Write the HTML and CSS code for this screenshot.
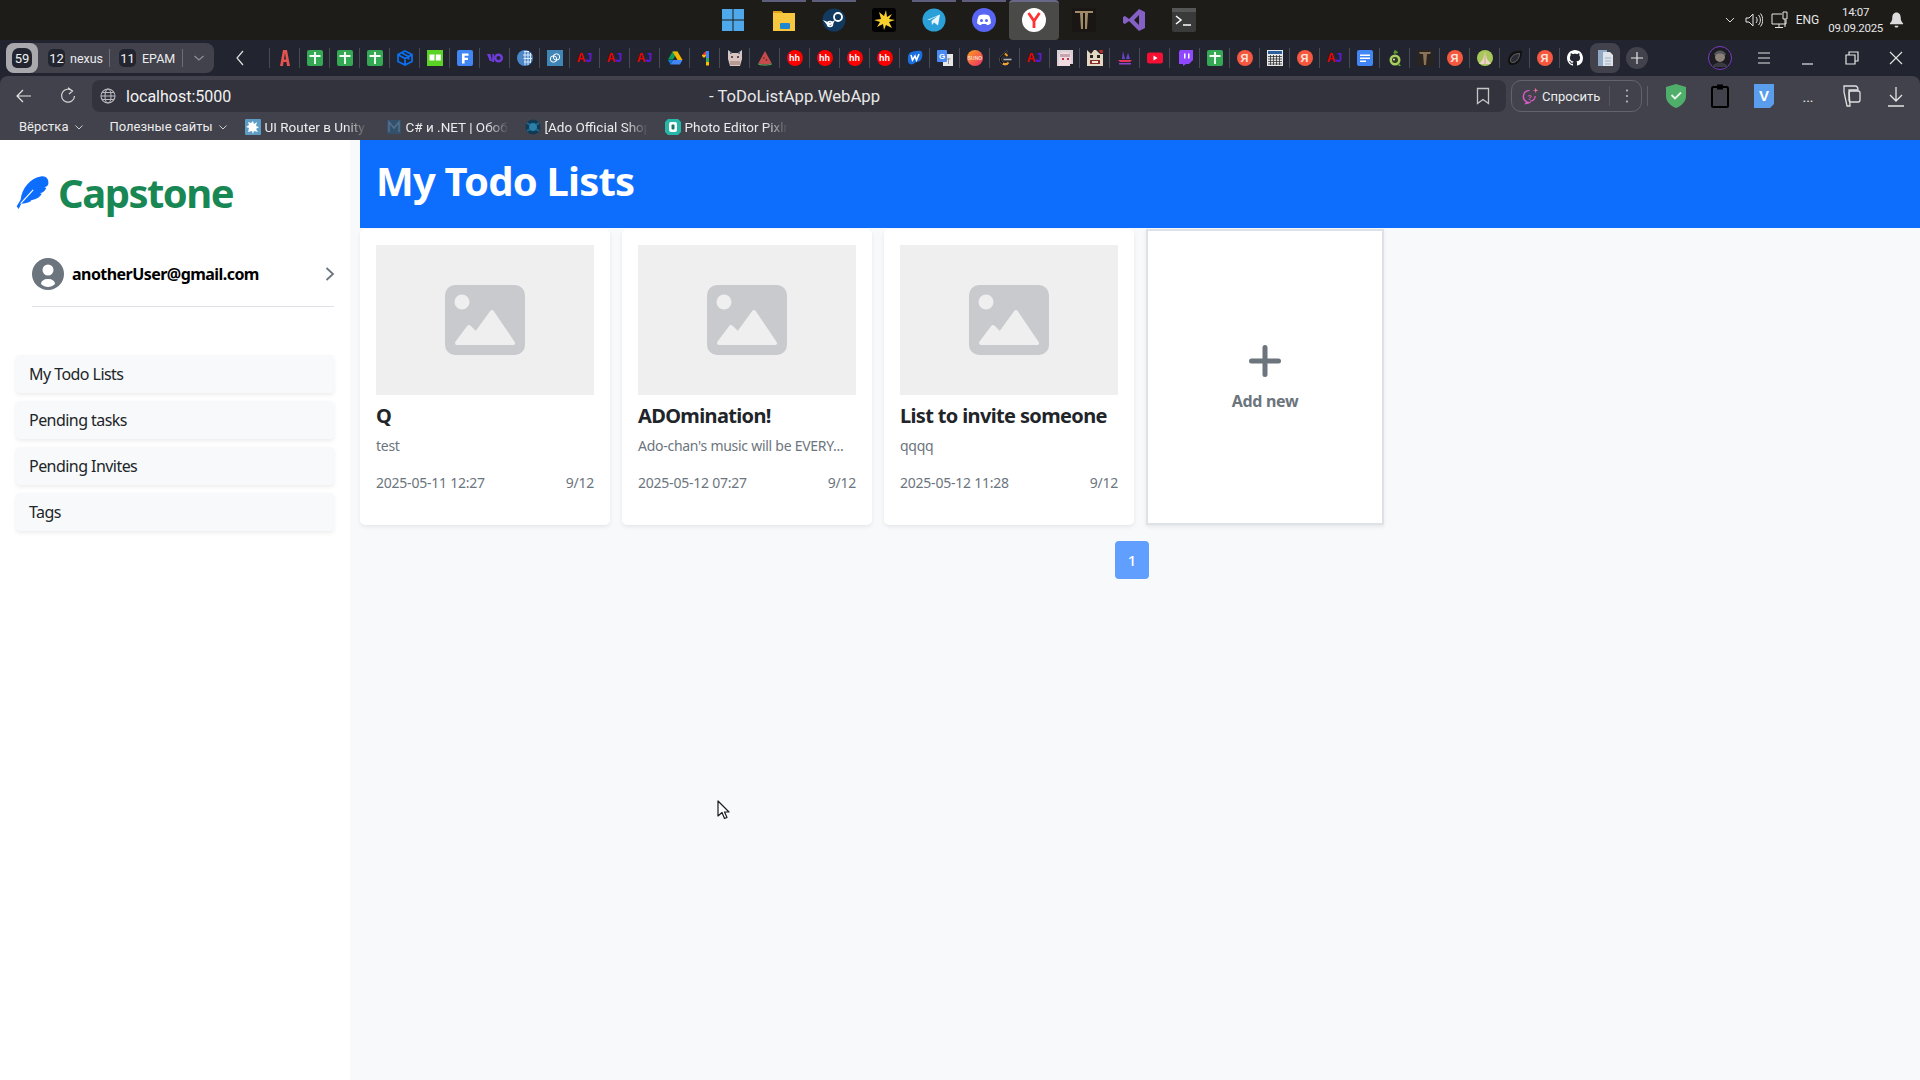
FILE: index.html
```html
<!DOCTYPE html>
<html lang="en">
<head>
    <meta charset="UTF-8">
    <meta name="viewport" content="width=device-width, initial-scale=1.0">
    <title>ToDoListApp.WebApp</title>
    <link rel="stylesheet" href="styles.css">
</head>
<body>
    <svg class="defs" aria-hidden="true">
        <defs>
            <linearGradient id="sunoGrad" x1="0" y1="0" x2="1" y2="1"><stop offset="0" stop-color="#f9a11b"/><stop offset="1" stop-color="#ee2a6b"/></linearGradient>
        </defs>
        <symbol id="fav-a" viewBox="0 0 16 16"><path d="M3 16 6 0h4l3 16h-3l-.5-4h-3L6 16zM7 9.500h2L8 3z" fill="#e5534f"/></symbol>
        <symbol id="fav-t" viewBox="0 0 16 16"><rect width="16" height="16" rx="2" fill="#34a853"/><path d="M2.500 6h11M8 2v12" stroke="#fff" stroke-width="1.800" fill="none"/></symbol>
        <symbol id="fav-cube" viewBox="0 0 16 16"><path d="M8 1 15 4.500v7L8 15 1 11.500v-7zM1.500 5 8 8.500 14.500 5M8 8.500V15M5 3l6.500 3.500v3" fill="none" stroke="#0b6ff0" stroke-width="1.800"/></symbol>
        <symbol id="fav-board" viewBox="0 0 16 16"><rect width="16" height="16" fill="#5bd324"/><rect x="2.500" y="4.500" width="5" height="6" fill="#fff"/><rect x="8.800" y="4.500" width="5" height="6" fill="#fff"/></symbol>
        <symbol id="fav-f" viewBox="0 0 16 16"><rect width="16" height="16" rx="2" fill="#4285f4"/><path d="M5 3.500h6.500v2.300H7.600v2h3.400v2.200H7.600v3.500H5z" fill="#fff"/></symbol>
        <symbol id="fav-yo" viewBox="0 0 16 16"><path d="M0 4h3.500L5 11H2.800zM5.500 4H7v8H5z" fill="#6f3ce0"/><circle cx="11.500" cy="8" r="3.300" fill="none" stroke="#6f3ce0" stroke-width="2.400"/></symbol>
        <symbol id="fav-globe" viewBox="0 0 16 16"><circle cx="8" cy="8" r="8" fill="#4a86c8"/><path d="M7 1.500h5M6 5h8.500M6.500 8.500h8.500M7 12h6M8 1v14M11 1v14M13.500 3v10" stroke="#dfeaf6" stroke-width="1" fill="none"/></symbol>
        <symbol id="fav-link" viewBox="0 0 16 16"><rect width="16" height="16" fill="#3f86b6"/><circle cx="6.500" cy="9" r="3.200" fill="none" stroke="#fff"/><circle cx="9.500" cy="7" r="3.200" fill="none" stroke="#fff"/></symbol>
        <symbol id="fav-drive" viewBox="0 0 16 16"><path d="M5.500 1.500h5L6 9.500H1z" fill="#0f9d58"/><path d="M10.500 1.500 15.500 10H10.500L5.500 1.500z" fill="#f4b400"/><path d="M3.500 14.500 6 10h9.500L13 14.500z" fill="#4285f4"/><path d="M1 10h5l-2.500 4.500z" fill="#0f7cd8"/></symbol>
        <symbol id="fav-one" viewBox="0 0 16 16"><path d="M5 5 9 1v4z" fill="#ea4335"/><path d="M5 5h4v1L7 8 5 6z" fill="#fbbc04"/><path d="M9 1h3v7H9z" fill="#4285f4"/><path d="M9 8h3v4H9z" fill="#34a853"/><path d="M9 12h3v3.500H9z" fill="#fbbc04"/></symbol>
        <symbol id="fav-cat" viewBox="0 0 16 16"><rect width="16" height="16" fill="#22252f"/><path d="M1 0 5 3h6l4-3v9l-2 7H3L1 9z" fill="#d8c5c0"/><path d="M3 1 5 4H3zM13 1v3h-2z" fill="#5a6ea8"/><rect x="4" y="6" width="2" height="2" fill="#6a4a5a"/><rect x="10" y="6" width="2" height="2" fill="#6a4a5a"/><rect x="3" y="11" width="10" height="4" fill="#b89a94"/></symbol>
        <symbol id="fav-melon" viewBox="0 0 16 16"><path d="M8 1 14.500 13c-3 2-10 2-13 0z" fill="#c94a4a"/><path d="M1.500 13c3 2 10 2 13 0l.5 1.500c-3 1.500-11 1.500-14 0z" fill="#4f9a55"/><circle cx="7" cy="8" r=".7" fill="#3a1a1a"/><circle cx="9.500" cy="10" r=".7" fill="#3a1a1a"/></symbol>
        <symbol id="fav-w" viewBox="0 0 16 16"><path d="M1 7c0-3 2-5 5-5.500C10 1 14 0 15 2c1 3 0 7-2 9-1.500 1-3 .5-4.500 1.500C6 15 3 15 1.500 13 .5 11 1 9 1 7z" fill="#1a6fe0"/><path d="M4 5l1.500 5L8 6l1.500 4L12 4" fill="none" stroke="#fff" stroke-width="1.600"/></symbol>
        <symbol id="fav-leet" viewBox="0 0 16 16"><path d="M10 1 4 7.500c-1 1.500-1 3 0 4l2 2c1.500 1 3 1 4.500 0" fill="none" stroke="#e8e8e8" stroke-width="1.800"/><path d="M10 1 4 7.500c-1 1.500-1 3 0 4l2 2" fill="none" stroke="#111" stroke-width="1.800"/><path d="M8 3.500 10.500 6" stroke="#f89f1b" stroke-width="1.800"/><path d="M6.500 9.500h8" stroke="#b3b3b3" stroke-width="1.600"/><path d="M6 13.500c1.500 1 3 1 4.500 0l1-1" fill="none" stroke="#f89f1b" stroke-width="1.800"/></symbol>
        <symbol id="fav-anime1" viewBox="0 0 16 16"><rect width="16" height="16" fill="#d8d0d4"/><path d="M2 16V5c1-4 11-4 12 0v11z" fill="#f1dbe0"/><path d="M3 4h10v3H3z" fill="#c8a4b0"/><rect x="5" y="8" width="2" height="2" fill="#b83a4a"/><rect x="10" y="8" width="2" height="2" fill="#b83a4a"/><rect x="13" y="14" width="3" height="2" fill="#222"/></symbol>
        <symbol id="fav-anime2" viewBox="0 0 16 16"><rect width="16" height="16" fill="#e2d8c4"/><path d="M0 0h7L4 4zM9 0h7v4l-3 0z" fill="#2a2326"/><path d="M12 0h4v3h-3z" fill="#b32c2c"/><rect x="3" y="5" width="3" height="3" fill="#2a2326"/><rect x="10" y="5" width="3" height="3" fill="#2a2326"/><path d="M3 10h10v4H3z" fill="#8a2e2e"/><path d="M5 11h6v2H5z" fill="#f1e8d8"/></symbol>
        <symbol id="fav-boat" viewBox="0 0 16 16"><path d="M6 1 5 9h3zM11 3l-2 6h4z" fill="#6a45c8"/><path d="M1 10h14l-2 2H3z" fill="#e5345f"/><path d="M2 13h12v1.500H2z" fill="#8a45d0"/></symbol>
        <symbol id="fav-yt" viewBox="0 0 16 16"><rect y="2.500" width="16" height="11" rx="2.500" fill="#f60f33"/><path d="M6.500 5.500 10.500 8l-4 2.500z" fill="#fff"/></symbol>
        <symbol id="fav-twitch" viewBox="0 0 16 16"><path d="M3 0h13v10l-4 4H9l-3 2v-2H2V2z" fill="#9146ff"/><path d="M7 3.500h1.500v5H7zM11 3.500h1.500v5H11z" fill="#fff"/></symbol>
        <symbol id="fav-table" viewBox="0 0 16 16"><rect width="16" height="16" fill="#e6e6e6"/><rect x="1" y="1" width="14" height="3" fill="#2d5f9a"/><path d="M1 6.500h14M1 9h14M1 11.500h14M1 14h14M3.500 5v10M6.500 5v10M9.500 5v10M12.500 5v10" stroke="#333" stroke-width=".8"/></symbol>
        <symbol id="fav-docs" viewBox="0 0 16 16"><rect width="16" height="16" rx="2" fill="#4285f4"/><path d="M3 4.500h10v1.500H3zM3 7.500h10V9H3zM3 10.500h6V12H3z" fill="#fff"/></symbol>
        <symbol id="fav-apple" viewBox="0 0 16 16"><circle cx="8" cy="10" r="5.500" fill="#a8d060"/><circle cx="8" cy="10" r="3" fill="#2f3a20"/><circle cx="7" cy="9.500" r="1" fill="#e8e8c8"/><path d="M7 4C6 2 7 1 8 0c1 1 3 1 3 3z" fill="#5a9a30"/><path d="M12 13l2 3h-3z" fill="#5a9a30"/></symbol>
        <symbol id="fav-dark" viewBox="0 0 16 16"><rect width="16" height="16" fill="#2a2420"/><path d="M2 2h12l-1 2h-3l-1 11H7L6 4H3z" fill="#8a7358"/></symbol>
        <symbol id="fav-pray" viewBox="0 0 16 16"><circle cx="8" cy="8" r="8" fill="#a8c85a"/><path d="M8 2 10 9l4 5H2l4-5z" fill="#ecd8c0"/><path d="M8 4v10" stroke="#b89a80" stroke-width=".7"/></symbol>
        <symbol id="fav-leaf" viewBox="0 0 16 16"><path d="M15 1C8 0 1 3 1 11c0 2 1 4 4 4 7 0 10-7 10-14z" fill="#111"/><path d="M12.500 3.500C8 3.500 3.500 6 3.500 10.500c0 1 .5 2 2 2 4 0 7-4 7-9z" fill="#2a2d36" stroke="#777" stroke-width=".8"/></symbol>
        <symbol id="fav-github" viewBox="0 0 16 16"><path fill="#fff" d="M8 0C3.580 0 0 3.580 0 8c0 3.540 2.290 6.530 5.470 7.590.4.070.55-.17.55-.38 0-.19-.01-.82-.01-1.490-2.010.37-2.530-.49-2.690-.94-.09-.23-.48-.94-.82-1.130-.28-.15-.68-.52-.01-.53.63-.01 1.080.58 1.230.82.720 1.210 1.870.87 2.330.66.070-.52.280-.87.510-1.070-1.780-.2-3.640-.89-3.640-3.950 0-.87.310-1.590.820-2.150-.08-.2-.36-1.020.08-2.120 0 0 .67-.21 2.200.82.640-.18 1.320-.27 2-.27.680 0 1.360.090 2 .270 1.530-1.040 2.200-.82 2.200-.82.440 1.100.160 1.920.080 2.120.510.560.820 1.270.820 2.150 0 3.070-1.870 3.750-3.650 3.950.29.250.54.730.54 1.480 0 1.070-.01 1.930-.01 2.200 0 .21.150.46.550.38A8.013 8.013 0 0016 8c0-4.420-3.580-8-8-8z"/></symbol>
        <symbol id="photo" viewBox="0 0 80 70"><rect width="80" height="70" rx="10" fill="#c9cacd"/><circle cx="17" cy="17" r="7.500" fill="#efefef"/><path d="M12 58 24 42l7 7L47 27l21 31z" fill="#efefef" stroke="#efefef" stroke-width="4" stroke-linejoin="round"/></symbol>
    </svg>

    <div class="taskbar">
        <div class="task-apps">
            <span class="task-app task-app-first"><svg class="task-icon" viewBox="0 0 24 24"><path d="M1 1h10.500v10.500H1zM12.500 1H23v10.500H12.500zM1 12.500h10.500V23H1zM12.500 12.500H23V23H12.500z" fill="#4fa8ea"/></svg></span>
            <span class="task-app task-app-on"><svg class="task-icon" viewBox="0 0 24 24"><path d="M1 3h8l2 2h12v18H1z" fill="#f7c83f"/><path d="M1 3h8l2 2H1z" fill="#e0a21c"/><rect x="8" y="15" width="10" height="6" rx="1" fill="#1f86d0"/></svg></span>
            <span class="task-app task-app-on"><svg class="task-icon" viewBox="0 0 24 24"><circle cx="12" cy="12" r="11.500" fill="#123a60"/><circle cx="16" cy="9" r="4" fill="none" stroke="#fff" stroke-width="1.800"/><circle cx="8" cy="16" r="2.500" fill="none" stroke="#fff" stroke-width="1.500"/><path d="M1 12l7 3 5-3-2 4-5 2z" fill="#fff"/></svg></span>
            <span class="task-app"><svg class="task-icon" viewBox="0 0 24 24"><rect width="24" height="24" rx="3" fill="#000"/><path d="M14 2l1 7 5-3-3 5 6 1-6 2 3 6-6-3-2 5-1-6-6 3 3-5-6-2 7-1-2-7 5 4z" fill="#f7d02c"/></svg></span>
            <span class="task-app task-app-on"><svg class="task-icon" viewBox="0 0 24 24"><circle cx="12" cy="12" r="11.500" fill="#2a9fd8"/><path d="M5 12l13-5.500-2 11-4-3-2 2.500-.5-4 6-5-8 4z" fill="#e8f5fb"/></svg></span>
            <span class="task-app task-app-on"><svg class="task-icon" viewBox="0 0 24 24"><circle cx="12" cy="12" r="12" fill="#5865f2"/><path d="M7 7.500c3-1.300 7-1.300 10 0 1.500 2.500 2 5.500 1.800 8-1.300 1-2.600 1.500-3.800 1.800l-.8-1.300H9.800L9 17.300c-1.200-.3-2.500-.8-3.800-1.800C5 13 5.500 10 7 7.500z" fill="#fff"/><circle cx="9.500" cy="12.500" r="1.500" fill="#5865f2"/><circle cx="14.500" cy="12.500" r="1.500" fill="#5865f2"/></svg></span>
            <span class="task-app task-app-active"><svg class="task-icon" viewBox="0 0 24 24"><circle cx="12" cy="12" r="12" fill="#fff"/><path d="M6.500 5l5.500 8 5.500-8M12 13v7" fill="none" stroke="#f33" stroke-width="2.800"/></svg></span>
            <span class="task-app"><svg class="task-icon" viewBox="0 0 24 24"><rect width="24" height="24" fill="#191613"/><path d="M3 3h18v2h-5l-1 16h-2V5h-2v16H9L8 5H3z" fill="#a08a68"/></svg></span>
            <span class="task-app"><svg class="task-icon" viewBox="0 0 24 24"><path d="M17 1l6 3v16l-6 3L7 13l-4 3-2-1V9l2-1 4 3zM17 7l-5 5 5 5z" fill="#8661c5" fill-rule="evenodd"/></svg></span>
            <span class="task-app"><svg class="task-icon" viewBox="0 0 24 24"><rect width="24" height="24" rx="2" fill="#3a3a3a"/><rect width="24" height="4" fill="#565656"/><path d="M4 8l5 4-5 4" fill="none" stroke="#fff" stroke-width="1.500"/><path d="M11 17h8" stroke="#fff" stroke-width="1.500"/></svg></span>
        </div>
        <div class="tray">
            <svg class="tray-chevron" viewBox="0 0 12 12"><path d="M2 4l4 4 4-4" fill="none" stroke="#ddd"/></svg>
            <svg class="tray-icon" viewBox="0 0 18 18"><path d="M1 7v4h3l4 4V3L4 7zM11 6c1.500 1.800 1.500 4.200 0 6M13.500 4c2.500 3 2.500 7 0 10M15.500 2.500c3 4 3 9 0 13" fill="none" stroke="#e6e6e6"/></svg>
            <svg class="tray-icon tray-net" viewBox="0 0 18 18"><path d="M11 3H1v10h14v-4M8 13v3M4 16.500h8M12 1h4v7h-4zM14 8v8" fill="none" stroke="#e6e6e6"/></svg>
            <span class="tray-lang">ENG</span>
            <div class="tray-clock"><span>14:07</span><span>09.09.2025</span></div>
            <svg class="tray-bell" viewBox="0 0 16 16"><path d="M8 0c3 0 4.500 2.500 4.500 5.500 0 3 1 4.500 2.500 6v1H1v-1c1.500-1.500 2.500-3 2.500-6C3.500 2.500 5 0 8 0zM6 14h4c0 1.500-1 2-2 2s-2-.5-2-2z" fill="#dcdcdc"/></svg>
        </div>
    </div>

    <div class="tabstrip">
        <div class="tab-groups">
            <span class="tab-count"><b class="tab-shield">59</b></span>
            <span class="tab-group tab-group-nexus"><b class="tab-badge">12</b>nexus</span>
            <span class="tab-group tab-group-epam"><b class="tab-badge">11</b>EPAM</span>
            <svg class="tab-more" viewBox="0 0 12 12"><path d="M1.500 4 6 8l4.500-4" fill="none" stroke="#8d8e98" stroke-width="1.300"/></svg>
        </div>
        <svg class="tab-back" viewBox="0 0 12 20"><path d="M9 3 3 10l6 7" fill="none" stroke="#e0e0e0" stroke-width="1.200"/></svg>
        <div class="favs">
            <span class="fav"><svg><use href="#fav-a"/></svg></span>
            <span class="fav"><svg><use href="#fav-t"/></svg></span>
            <span class="fav"><svg><use href="#fav-t"/></svg></span>
            <span class="fav"><svg><use href="#fav-t"/></svg></span>
            <span class="fav"><svg><use href="#fav-cube"/></svg></span>
            <span class="fav"><svg><use href="#fav-board"/></svg></span>
            <span class="fav"><svg><use href="#fav-f"/></svg></span>
            <span class="fav"><svg><use href="#fav-yo"/></svg></span>
            <span class="fav"><svg><use href="#fav-globe"/></svg></span>
            <span class="fav"><svg><use href="#fav-link"/></svg></span>
            <span class="fav"><b class="ico-aj">A<i>J</i></b></span>
            <span class="fav"><b class="ico-aj">A<i>J</i></b></span>
            <span class="fav"><b class="ico-aj">A<i>J</i></b></span>
            <span class="fav"><svg><use href="#fav-drive"/></svg></span>
            <span class="fav"><svg><use href="#fav-one"/></svg></span>
            <span class="fav"><svg><use href="#fav-cat"/></svg></span>
            <span class="fav"><svg><use href="#fav-melon"/></svg></span>
            <span class="fav"><b class="ico-hh">hh</b></span>
            <span class="fav"><b class="ico-hh">hh</b></span>
            <span class="fav"><b class="ico-hh">hh</b></span>
            <span class="fav"><b class="ico-hh">hh</b></span>
            <span class="fav"><svg><use href="#fav-w"/></svg></span>
            <span class="fav"><svg viewBox="0 0 16 16"><rect x="6" y="4" width="10" height="12" fill="#e8e8e8"/><rect width="10" height="12" rx="1" fill="#4a8af4"/><text x="5" y="9" class="glyph-small" fill="#fff" text-anchor="middle">G</text><path d="M9.500 9h4M11.500 8v6" stroke="#9a9a9a"/></svg></span>
            <span class="fav"><svg viewBox="0 0 16 16"><circle cx="8" cy="8" r="8" fill="url(#sunoGrad)"/><text x="8" y="9.800" class="glyph-tiny" fill="#fbd9c0" text-anchor="middle">SUNO</text></svg></span>
            <span class="fav"><svg><use href="#fav-leet"/></svg></span>
            <span class="fav"><b class="ico-aj">A<i>J</i></b></span>
            <span class="fav"><svg><use href="#fav-anime1"/></svg></span>
            <span class="fav"><svg><use href="#fav-anime2"/></svg></span>
            <span class="fav"><svg><use href="#fav-boat"/></svg></span>
            <span class="fav"><svg><use href="#fav-yt"/></svg></span>
            <span class="fav"><svg><use href="#fav-twitch"/></svg></span>
            <span class="fav"><svg><use href="#fav-t"/></svg></span>
            <span class="fav"><b class="ico-ya">Я</b></span>
            <span class="fav"><svg><use href="#fav-table"/></svg></span>
            <span class="fav"><b class="ico-ya">Я</b></span>
            <span class="fav"><b class="ico-aj">A<i>J</i></b></span>
            <span class="fav"><svg><use href="#fav-docs"/></svg></span>
            <span class="fav"><svg><use href="#fav-apple"/></svg></span>
            <span class="fav"><svg><use href="#fav-dark"/></svg></span>
            <span class="fav"><b class="ico-ya">Я</b></span>
            <span class="fav"><svg><use href="#fav-pray"/></svg></span>
            <span class="fav"><svg><use href="#fav-leaf"/></svg></span>
            <span class="fav"><b class="ico-ya">Я</b></span>
            <span class="fav"><svg><use href="#fav-github"/></svg></span>
        </div>
        <span class="tab-active"><svg viewBox="0 0 18 18"><path d="M2 1h9v16H2z" fill="#8fa8c4"/><path d="M7 3h7l3 3v11H7z" fill="#dfe4ea"/><path d="M9 9h6M9 12h6M9 15h6" stroke="#9fb0c2"/></svg></span>
        <span class="tab-new"><svg viewBox="0 0 14 14"><path d="M7 1v12M1 7h12" stroke="#e8e8e8" stroke-width="1.200"/></svg></span>
        <span class="tab-avatar"><svg viewBox="0 0 24 24"><circle cx="12" cy="12" r="11.500" fill="#1c1c22" stroke="#7a3fc0"/><circle cx="12" cy="11" r="5" fill="#8a8178"/><path d="M4 21c2-6 14-6 16 0z" fill="#3a3a42"/><path d="M6 9c1-6 11-6 12 0H16c-1-2-7-2-8 0z" fill="#55555c"/></svg></span>
        <div class="win-buttons">
            <svg viewBox="0 0 16 16"><path d="M2 3h12M2 8h12M2 13h12" stroke="#e6e6e6"/></svg>
            <svg viewBox="0 0 16 16"><path d="M2 14h11" stroke="#e6e6e6" stroke-width="1.200"/></svg>
            <svg viewBox="0 0 16 16"><path d="M5 5V2h9v9h-3M2 5h9v9H2z" fill="none" stroke="#e6e6e6" stroke-width="1.200"/></svg>
            <svg viewBox="0 0 16 16"><path d="M2 2l12 12M14 2 2 14" stroke="#e6e6e6" stroke-width="1.100"/></svg>
        </div>
    </div>

    <div class="browser-panel">
        <div class="address-row">
            <svg class="nav-btn" viewBox="0 0 18 18"><path d="M16 9H2M8 3 2 9l6 6" fill="none" stroke="#e4e4e4" stroke-width="1.200"/></svg>
            <svg class="nav-btn" viewBox="0 0 18 18"><path d="M13.500 4A6.500 6.500 0 1 0 15.500 9M9 0.800l4.500 3.200-3.500 3" fill="none" stroke="#d8d8d8" stroke-width="1.200"/></svg>
            <div class="address-bar">
                <svg class="address-globe" viewBox="0 0 16 16"><g fill="none" stroke="#b9b9bf" stroke-width="1.100"><circle cx="8" cy="8" r="7"/><ellipse cx="8" cy="8" rx="3" ry="7"/><path d="M1 8h14M2 4.500h12M2 11.500h12"/></g></svg>
                <span class="address-url">localhost:5000</span>
                <span class="address-title">- ToDoListApp.WebApp</span>
                <svg class="address-mark" viewBox="0 0 14 18"><path d="M1.500 1.500h11v15L7 12.500l-5.500 4z" fill="none" stroke="#c6c6c9" stroke-width="1.300"/></svg>
            </div>
            <div class="ask-pill">
                <svg class="ask-icon" viewBox="0 0 18 18"><path d="M8 3a6.500 6.500 0 1 0 0 13c-1 1-3 1-4 1 .5-.5 1-1.500.5-2A6.500 6.500 0 0 1 8 3z" fill="none" stroke="#d95cc4" stroke-width="1.400"/><path d="M8.500 14.500A6 6 0 0 0 14 9" fill="none" stroke="#d95cc4" stroke-width="1.400"/><text x="5.500" y="13" class="glyph-small" fill="#d95cc4">?</text><path d="M14.500 0l.7 2.300 2.300.7-2.300.7-.7 2.300-.7-2.300-2.300-.7 2.300-.7z" fill="#ef6ba8"/></svg>
                <span class="ask-text">Спросить</span>
                <span class="ask-sep"></span>
                <svg class="ask-dots" viewBox="0 0 4 16"><circle cx="2" cy="2.500" r="1.100" fill="#b9b9bf"/><circle cx="2" cy="8" r="1.100" fill="#b9b9bf"/><circle cx="2" cy="13.500" r="1.100" fill="#b9b9bf"/></svg>
            </div>
            <span class="tool-sep"></span>
            <div class="tools">
                <svg viewBox="0 0 20 24"><path d="M10 0l10 3v9c0 6-5 10-10 12C5 22 0 18 0 12V3z" fill="#4fae6a"/><path d="M5.500 11l3.500 3.500 6-6" fill="none" stroke="#e8f5ea" stroke-width="1.800"/></svg>
                <svg viewBox="0 0 18 24"><rect x="1" y="3" width="16" height="20" rx="1.500" fill="none" stroke="#000" stroke-width="2"/><rect x="6" y="0.500" width="6" height="5" fill="#000"/></svg>
                <svg viewBox="0 0 20 24"><path d="M0 0h20v20l-4 4H0z" fill="#5b9ded"/><text x="10" y="17" class="glyph-v" fill="#fff" text-anchor="middle">V</text></svg>
                <span class="tool-more">...</span>
                <svg viewBox="0 0 20 24"><path d="M2 2h11c3 0 3 2 3 4H7l1 16H5L2 8z" fill="none" stroke="#e0e0e0" stroke-width="1.300"/><rect x="7" y="7" width="11" height="11" rx="2" fill="none" stroke="#e0e0e0" stroke-width="1.300"/></svg>
                <svg viewBox="0 0 20 24"><path d="M10 3v14M4 11l6 6 6-6M2 22h16" fill="none" stroke="#e4e4e4" stroke-width="1.300"/></svg>
            </div>
        </div>
        <div class="bookmarks">
            <span class="bm-folder bm-first">Вёрстка<svg viewBox="0 0 10 10"><path d="M1.500 3.500 5 7l3.500-3.500" fill="none" stroke="#cfcfd3"/></svg></span>
            <span class="bm-folder">Полезные сайты<svg viewBox="0 0 10 10"><path d="M1.500 3.500 5 7l3.500-3.500" fill="none" stroke="#cfcfd3"/></svg></span>
            <span class="bm-link bm-link-wide"><svg viewBox="0 0 16 16"><rect width="16" height="16" rx="1" fill="#5d9cc4"/><path d="M8 2l1 3 3-2-1 4 3 1-3 2 2 3-4-1-1 3-1-3-4 1 1-4-3-1 3-2-1-3 3 1z" fill="#fff"/></svg><span class="bm-label">UI Router в Unity</span></span>
            <span class="bm-link"><svg viewBox="0 0 16 16"><path d="M1 1h14v14H1z" fill="#34506a"/><path d="M3 13V3l5 6 5-6v10" fill="none" stroke="#52728e" stroke-width="1.500"/></svg><span class="bm-label">C# и .NET | Обоб</span></span>
            <span class="bm-link bm-link-ado"><svg viewBox="0 0 16 16"><circle cx="8" cy="8" r="7.500" fill="#113a55"/><circle cx="8" cy="8" r="4" fill="#2c7fa8"/><path d="M2 4l3 2M14 4l-3 2M2 12l3-2M14 12l-3-2" stroke="#1d6a8f" stroke-width="2"/></svg><span class="bm-label">[Ado Official Shop</span></span>
            <span class="bm-link"><svg viewBox="0 0 16 16"><path d="M3 0h10l3 3v10l-3 3H3l-3-3V3z" fill="#26b7a8"/><rect x="4" y="3" width="8" height="10" rx="2" fill="#fff"/><rect x="6.500" y="5.500" width="3" height="5" rx="1" fill="#17756c"/></svg><span class="bm-label">Photo Editor Pixlr:</span></span>
        </div>
    </div>

    <div class="app">
        <aside class="sidebar">
            <div class="brand">
                <svg class="brand-icon" viewBox="20 24 100 100"><path d="M22 116 34 96C38 62 62 30 98 25c14-1 22 9 20 23-2 6-6 8-12 10l6 2c-4 10-12 14-20 16l6 2c-6 12-20 18-34 20l2 2c-10 6-20 8-30 8l-8 16z" fill="#0d6efd"/><path d="M34 108 72 66" stroke="#fff" stroke-width="3.500"/></svg>
                <span class="brand-name">Capstone</span>
            </div>
            <div class="user-row">
                <svg class="user-avatar" viewBox="0 0 32 32"><circle cx="16" cy="16" r="16" fill="#6c757d"/><circle cx="16" cy="12" r="5.500" fill="#fff"/><path d="M9 26c0-3 3-5 7-5s7 2 7 5c-2 2-4.500 3-7 3s-5-1-7-3z" fill="#fff"/></svg>
                <span class="user-email">anotherUser@gmail.com</span>
                <svg class="user-chevron" viewBox="0 0 10 16"><path d="M1.500 2l6.500 6-6.500 6" fill="none" stroke="#6c757d" stroke-width="1.800"/></svg>
            </div>
            <nav class="side-nav">
                <a class="side-link">My Todo Lists</a>
                <a class="side-link">Pending tasks</a>
                <a class="side-link">Pending Invites</a>
                <a class="side-link">Tags</a>
            </nav>
        </aside>
        <main class="main">
            <header class="page-head"><h1>My Todo Lists</h1></header>
            <section class="card-grid">
                <article class="todo-card">
                    <div class="todo-img"><svg><use href="#photo"/></svg></div>
                    <h2>Q</h2>
                    <p class="todo-desc">test</p>
                    <div class="todo-meta"><span>2025-05-11 12:27</span><span>9/12</span></div>
                </article>
                <article class="todo-card">
                    <div class="todo-img"><svg><use href="#photo"/></svg></div>
                    <h2>ADOmination!</h2>
                    <p class="todo-desc">Ado-chan's music will be EVERY...</p>
                    <div class="todo-meta"><span>2025-05-12 07:27</span><span>9/12</span></div>
                </article>
                <article class="todo-card">
                    <div class="todo-img"><svg><use href="#photo"/></svg></div>
                    <h2>List to invite someone</h2>
                    <p class="todo-desc">qqqq</p>
                    <div class="todo-meta"><span>2025-05-12 11:28</span><span>9/12</span></div>
                </article>
                <a class="add-card">
                    <svg viewBox="0 0 32 32"><path d="M16 2.500v27M2.500 16h27" stroke="#6c757d" stroke-width="5" stroke-linecap="round"/></svg>
                    <span>Add new</span>
                </a>
            </section>
            <div class="pager"><span class="page-num">1</span></div>
        </main>
    </div>

    <svg class="mouse" viewBox="0 0 13 20"><path d="M1 1v15l4-3.500 2.500 6 2.500-1-2.500-5.500H12z" fill="#fff" stroke="#1a1a22" stroke-width="1.200" stroke-linejoin="round"/></svg>
</body>
</html>
```

FILE: styles.css
```css
* {
    box-sizing: border-box;
}
html, body {
    height: 100%;
}
body {
    margin: 0;
    display: flex;
    flex-direction: column;
    overflow: hidden;
    font-family: "Noto Sans", "Open Sans", sans-serif;
    background-color: #22252f;
    color: #212529;
}
.defs {
    display: block;
    width: 0;
    height: 0;
}
.glyph-small {
    font: 700 8px "Liberation Sans", sans-serif;
}
.glyph-tiny {
    font: 700 5px "Liberation Sans", sans-serif;
}
.glyph-v {
    font: 700 15px "Liberation Sans", sans-serif;
}

/* windows taskbar */
.taskbar {
    height: 40px;
    flex: none;
    display: flex;
    background-color: #1d1c19;
    color: #e6e6e6;
    font-family: Roboto, sans-serif;
}
.task-apps {
    display: flex;
    margin-left: 707px;
}
.task-app {
    width: 50px;
    height: 40px;
    padding-bottom: 2px;
    display: flex;
    align-items: center;
    justify-content: center;
    border-top: 2px solid transparent;
}
.task-app-first {
    width: 52px;
}
.task-app-on {
    border-image: linear-gradient(to right, transparent 5px, #5f5d7c 5px, #5f5d7c 45px, transparent 45px) 2;
}
.task-app-active {
    background-color: #4a4a48;
    border-radius: 4px;
    border-top-color: #6a6888;
}
.task-icon {
    width: 24px;
    height: 24px;
}
.tray {
    margin-left: auto;
    display: flex;
    align-items: center;
    padding-right: 16px;
    font-size: 12px;
}
.tray-chevron {
    width: 12px;
    height: 12px;
    margin-right: 9px;
}
.tray-icon {
    width: 18px;
    height: 18px;
    margin-right: 8px;
}
.tray-net {
    margin-right: 7px;
}
.tray-lang {
    margin-right: 9px;
}
.tray-clock {
    display: flex;
    flex-direction: column;
    align-items: center;
    line-height: 16px;
    margin-right: 6px;
    font-size: 11.500px;
    letter-spacing: -0.3px;
}
.tray-bell {
    width: 15px;
    height: 16px;
}

/* tab strip */
.tabstrip {
    height: 36px;
    flex: none;
    display: flex;
    align-items: center;
    padding: 0 0 0 6px;
    background-color: #22252f;
    color: #ececec;
    font-family: Roboto, sans-serif;
    font-size: 12.500px;
}
.tab-groups {
    width: 208px;
    height: 30px;
    display: flex;
    align-items: center;
    background-color: #41424c;
    border-radius: 8px;
}
.tab-count {
    width: 32px;
    height: 30px;
    display: flex;
    align-items: center;
    justify-content: center;
    background-color: #a9a9ad;
    border-radius: 8px;
}
.tab-shield, .tab-badge {
    height: 18px;
    min-width: 17px;
    display: flex;
    align-items: center;
    justify-content: center;
    font-weight: 400;
    font-size: 13px;
    color: #f2f2f2;
    background-color: #22252f;
    border-radius: 5px;
}
.tab-shield {
    width: 20px;
    height: 20px;
    border-radius: 7px 7px 5px 5px;
}
.tab-group {
    display: flex;
    align-items: center;
    gap: 5px;
    height: 18px;
    border-right: 1px solid #6b6c76;
    white-space: nowrap;
}
.tab-group-nexus {
    width: 72px;
    padding-left: 10px;
}
.tab-group-epam {
    width: 73px;
    padding-left: 9px;
    gap: 6px;
}
.tab-more {
    width: 12px;
    height: 12px;
    margin-left: 10px;
}
.tab-back {
    width: 12px;
    height: 20px;
    margin: 0 23px 0 20px;
    flex: none;
}
.favs {
    display: flex;
    flex: none;
}
.fav {
    width: 30px;
    height: 20px;
    display: flex;
    align-items: center;
    justify-content: center;
    border-left: 1px solid #484a54;
}
.fav svg {
    width: 16px;
    height: 16px;
}
.ico-aj {
    font: 900 12px/16px "Liberation Sans", sans-serif;
    color: #f00000;
}
.ico-aj i {
    color: #5b1ae0;
    font-style: normal;
}
.ico-hh, .ico-ya {
    width: 16px;
    height: 16px;
    display: flex;
    align-items: center;
    justify-content: center;
    border-radius: 50%;
    font-family: "Liberation Sans", sans-serif;
    font-weight: 700;
}
.ico-hh {
    background-color: #f00;
    color: #fff;
    font-size: 9px;
}
.ico-ya {
    background-color: #f6573f;
    color: #fbe3dc;
    font-size: 11px;
}
.tab-active {
    width: 30px;
    height: 30px;
    margin-left: 1px;
    display: flex;
    align-items: center;
    justify-content: center;
    background-color: #41424c;
    border-radius: 8px;
}
.tab-active svg {
    width: 18px;
    height: 18px;
}
.tab-new {
    width: 22px;
    height: 22px;
    margin-left: 6px;
    display: flex;
    align-items: center;
    justify-content: center;
    background-color: #41424c;
    border-radius: 50%;
}
.tab-new svg {
    width: 14px;
    height: 14px;
}
.tab-avatar {
    width: 24px;
    height: 24px;
    margin-left: 60px;
}
.tab-avatar svg {
    width: 24px;
    height: 24px;
    display: block;
}
.win-buttons {
    display: flex;
    margin-left: 10px;
}
.win-buttons svg {
    width: 44px;
    height: 16px;
}

/* address bar and bookmarks */
.browser-panel {
    height: 64px;
    flex: none;
    background-color: #41424c;
    border-radius: 8px 8px 0 0;
    color: #ececec;
    font-family: Roboto, sans-serif;
}
.address-row {
    height: 37px;
    display: flex;
    align-items: center;
    padding: 4px 0 1px 2px;
}
.nav-btn {
    width: 44px;
    height: 18px;
    flex: none;
}
.address-bar {
    width: 1414px;
    height: 32px;
    margin-left: 2px;
    display: flex;
    align-items: center;
    padding: 0 16px 0 8px;
    background-color: #32333d;
    border-radius: 8px;
    font-size: 16.700px;
}
.address-globe {
    width: 16px;
    height: 16px;
    margin-right: 10px;
}
.address-url {
    width: 583px;
    font-size: 16px;
    color: #f2f2f2;
}
.address-title {
    color: #e8e8e8;
}
.address-mark {
    width: 14px;
    height: 18px;
    margin-left: auto;
}
.ask-pill {
    width: 131px;
    height: 32px;
    margin-left: 5px;
    display: flex;
    align-items: center;
    padding-left: 10px;
    border: 1px solid #62636d;
    border-radius: 10px;
    font-size: 13px;
}
.ask-icon {
    width: 17px;
    height: 18px;
    margin-right: 3px;
}
.ask-sep {
    width: 1px;
    height: 20px;
    margin-left: 9px;
    background-color: #55565f;
}
.ask-dots {
    width: 4px;
    height: 16px;
    margin-left: 15px;
}
.tool-sep {
    width: 1px;
    height: 20px;
    margin-left: 5px;
    background-color: #5e5f69;
}
.tools {
    display: flex;
    align-items: center;
    margin-left: 6px;
}
.tools svg, .tool-more {
    width: 44px;
    height: 24px;
}
.tool-more {
    text-align: center;
    font-size: 14px;
    line-height: 26px;
}
.bookmarks {
    height: 27px;
    display: flex;
    align-items: center;
    padding-left: 19px;
    font-size: 13.500px;
    white-space: nowrap;
}
.bm-folder {
    display: flex;
    align-items: center;
    gap: 6px;
    margin-right: 17px;
    font-size: 13px;
}
.bm-folder svg {
    width: 10px;
    height: 10px;
}
.bm-first {
    margin-right: 25px;
}
.bm-link {
    display: flex;
    align-items: center;
    gap: 3px;
    margin-right: 16px;
}
.bm-link-wide {
    margin-right: 18px;
}
.bm-link-ado {
    margin-right: 17px;
}
.bm-link svg {
    width: 16px;
    height: 16px;
    flex: none;
}
.bm-label {
    width: 104px;
    -webkit-mask-image: linear-gradient(to right, #000 78%, transparent);
    mask-image: linear-gradient(to right, #000 78%, transparent);
}

/* the page itself */
.app {
    flex: 1;
    min-height: 0;
    display: flex;
    background-color: #f8f9fa;
}
.sidebar {
    width: 350px;
    flex: none;
    background-color: #fff;
    padding: 0 16px;
}
.brand {
    height: 106px;
    display: flex;
    align-items: center;
    gap: 9px;
    padding: 0 0 2px;
}
.brand-icon {
    width: 33px;
    height: 33px;
    flex: none;
}
.brand-name {
    font-size: 40px;
    font-weight: 700;
    color: #198754;
    letter-spacing: -1.500px;
}
.user-row {
    height: 61px;
    margin: 0 0 48px 16px;
    display: flex;
    align-items: flex-start;
    padding-top: 12px;
    border-bottom: 1px solid #dee2e6;
}
.user-avatar {
    width: 32px;
    height: 32px;
    flex: none;
}
.user-email {
    margin-left: 8px;
    font-size: 16px;
    font-weight: 700;
    line-height: 32px;
    letter-spacing: -0.550px;
    color: #000;
}
.user-chevron {
    width: 10px;
    height: 16px;
    margin: 8px -1px 0 auto;
}
.side-nav {
    display: flex;
    flex-direction: column;
    gap: 8px;
}
.side-link {
    height: 38px;
    display: flex;
    align-items: center;
    padding-left: 13px;
    background-color: #f8f9fa;
    border-radius: 4px;
    box-shadow: 0 2px 4px rgba(0, 0, 0, .075);
    font-size: 16px;
    letter-spacing: -0.550px;
}
.main {
    flex: 1;
    min-width: 0;
}
.page-head {
    height: 88px;
    margin-left: 10px;
    padding: 0 16px 8px;
    display: flex;
    align-items: center;
    background-color: #0d6efd;
    color: #fff;
}
.page-head h1 {
    margin: 0;
    font-size: 40px;
    font-weight: 700;
    letter-spacing: -0.800px;
}
.card-grid {
    display: grid;
    grid-template-columns: repeat(3, 250px) 238px;
    gap: 12px;
    margin: 1px 0 0 10px;
}
.todo-card {
    height: 296px;
    padding: 16px;
    background-color: #fff;
    border-radius: 5px;
    box-shadow: 0 2px 4px rgba(0, 0, 0, .075);
}
.todo-img {
    height: 150px;
    display: flex;
    align-items: center;
    justify-content: center;
    background-color: #efefef;
}
.todo-img svg {
    width: 80px;
    height: 70px;
}
.todo-card h2 {
    margin: 8px 0 0;
    font-size: 20px;
    font-weight: 700;
    line-height: 26px;
    letter-spacing: -0.650px;
    color: #212529;
}
.todo-desc {
    margin: 6px 0 0;
    font-size: 14px;
    line-height: 21px;
    letter-spacing: -0.270px;
    color: #6c757d;
}
.todo-meta {
    display: flex;
    justify-content: space-between;
    margin-top: 16px;
    font-size: 14px;
    line-height: 21px;
    letter-spacing: -0.230px;
    color: #6c757d;
}
.add-card {
    height: 296px;
    display: flex;
    flex-direction: column;
    align-items: center;
    padding-top: 114px;
    background-color: #fff;
    border: 2px solid #dee2e6;
    box-shadow: 0 2px 4px rgba(0, 0, 0, .075);
    color: #6c757d;
    font-size: 16px;
    font-weight: 700;
    letter-spacing: -0.300px;
}
.add-card svg {
    width: 32px;
    height: 32px;
    margin-bottom: 13px;
}
.pager {
    display: flex;
    justify-content: center;
    margin-top: 16px;
    padding-right: 6px;
}
.page-num {
    width: 34px;
    height: 38px;
    display: flex;
    align-items: center;
    justify-content: center;
    background-color: #609ffe;
    border-radius: 4px;
    color: #fff;
    font-size: 15px;
    font-weight: 500;
}
.mouse {
    position: absolute;
    left: 717px;
    top: 800px;
    width: 13px;
    height: 20px;
}
```
